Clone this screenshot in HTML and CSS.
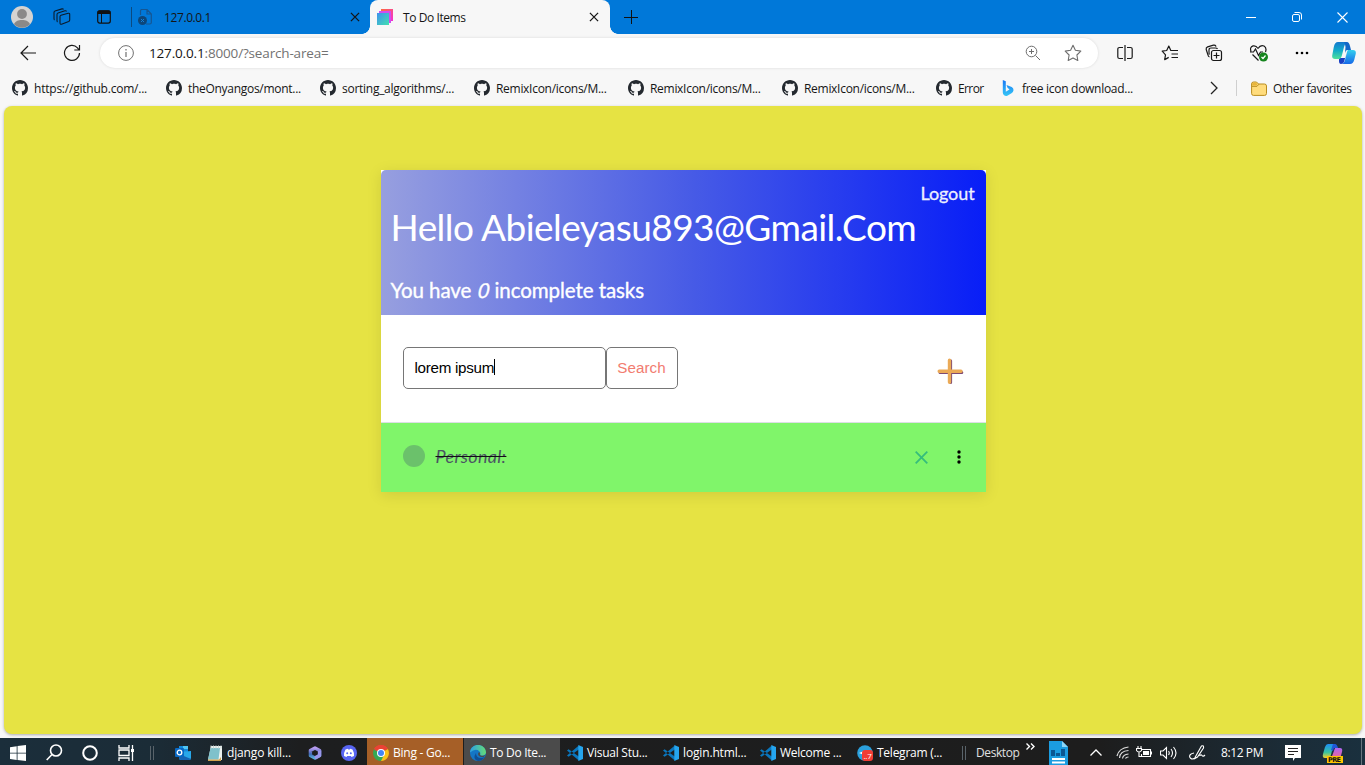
FILE: index.html
```html
<!DOCTYPE html>
<html lang="en">
<head>
<meta charset="utf-8">
<title>To Do Items</title>
<link rel="stylesheet" href="styles.css">
</head>
<body>
<svg class="defs" aria-hidden="true">
  <defs>
    <linearGradient id="gFav" x1="0" y1="0" x2="1" y2="1"><stop offset="0" stop-color="#3d91ee"/><stop offset="1" stop-color="#42e0b0"/></linearGradient>
    <linearGradient id="gFavP" x1="0" y1="0" x2="1" y2="1"><stop offset="0" stop-color="#ff6a3c"/><stop offset="1" stop-color="#f22fd6"/></linearGradient>
    <linearGradient id="gBing" x1="0" y1="0" x2="0" y2="1"><stop offset="0" stop-color="#1877f5"/><stop offset="1" stop-color="#36c6f6"/></linearGradient>
    <linearGradient id="gCopA" x1="0" y1="0" x2="0" y2="1"><stop offset="0" stop-color="#1478ce"/><stop offset=".5" stop-color="#12abc9"/><stop offset="1" stop-color="#4fe29a"/></linearGradient>
    <linearGradient id="gCopB" x1="0" y1="0" x2="0" y2="1"><stop offset="0" stop-color="#34d0ee"/><stop offset="1" stop-color="#1668e8"/></linearGradient>
    <linearGradient id="gPreA" x1="0" y1="0" x2="0" y2="1"><stop offset="0" stop-color="#1d8df5"/><stop offset=".6" stop-color="#38c4a0"/><stop offset="1" stop-color="#f5cf29"/></linearGradient>
    <linearGradient id="gPreB" x1="0" y1="0" x2="0" y2="1"><stop offset="0" stop-color="#ac65f3"/><stop offset="1" stop-color="#f4668c"/></linearGradient>
    <linearGradient id="gOff" x1="0" y1="0" x2="0" y2="1"><stop offset="0" stop-color="#b79af0"/><stop offset=".6" stop-color="#3f68b4"/><stop offset="1" stop-color="#5ab0d8"/></linearGradient>
    <linearGradient id="gEdge" x1="0" y1="0" x2="1" y2="0"><stop offset="0" stop-color="#2c9fe4"/><stop offset="1" stop-color="#65dc75"/></linearGradient>
    <symbol id="github" viewBox="0 0 16 16"><path fill="#24292f" d="M8 0C3.58 0 0 3.58 0 8c0 3.54 2.29 6.53 5.47 7.59.4.07.55-.17.55-.38 0-.19-.01-.82-.01-1.49-2.01.37-2.53-.49-2.69-.94-.09-.23-.48-.94-.82-1.13-.28-.15-.68-.52-.01-.53.63-.01 1.08.58 1.23.82.72 1.21 1.87.87 2.33.66.07-.52.28-.87.51-1.07-1.78-.2-3.64-.89-3.64-3.95 0-.87.31-1.59.82-2.15-.08-.2-.36-1.02.08-2.12 0 0 .67-.21 2.2.82.64-.18 1.32-.27 2-.27s1.36.09 2 .27c1.53-1.04 2.2-.82 2.2-.82.44 1.1.16 1.92.08 2.12.51.56.82 1.27.82 2.15 0 3.07-1.87 3.75-3.65 3.95.29.25.54.73.54 1.48 0 1.07-.01 1.93-.01 2.2 0 .21.15.46.55.38A8.01 8.01 0 0 0 16 8c0-4.42-3.58-8-8-8z"/></symbol>
    <symbol id="close" viewBox="0 0 12 12"><path d="M2.500 2.500l7 7M9.500 2.500l-7 7" fill="none" stroke="currentColor" stroke-width="1.100"/></symbol>
    <symbol id="vscode" viewBox="0 0 16 16"><path fill="#0a76bd" d="M1.6 4.2L0 5.400l11.500 9.800 1-3.100zM1.600 11.800L0 10.600 11.500.8l1 3.100z"/><path fill="#25a5ee" d="M11.300 0L16 2v12l-4.700 2z"/></symbol>
  </defs>
</svg>

<header class="tabstrip">
  <div class="cell"><svg width="22" height="22" viewBox="0 0 22 22"><circle cx="11" cy="11" r="11" fill="#d5d3d1"/><circle cx="11" cy="8" r="4.900" fill="#8b8988"/><path fill="#8b8988" d="M3 18.300c1.500-5.700 14.500-5.700 16 0A11 11 0 0 1 3 18.300z"/></svg></div>
  <div class="cell"><svg width="18" height="18" viewBox="0 0 18 18" fill="none" stroke="#0a1a2a" stroke-width="1.100" stroke-linejoin="round"><path d="M7 8.500Q7 7.500 8 7.200L15.200 5.200Q16.700 5 16.700 6.500V12Q16.700 13 15.700 13.500L8.500 16.300Q7 16.500 7 15zM4.500 14Q4 13.500 4 12.500V6.500Q4 5.300 5 5L12 2.800Q13.300 2.600 13.500 3.500M1.500 12Q1 11.500 1 10.500V4.500Q1 3.300 2 3L9 .9Q10.200.7 10.500 1.500"/></svg></div>
  <div class="cell"><svg width="14" height="14" viewBox="0 0 14 14"><rect x=".7" y=".9" width="12.600" height="12.200" rx="2" fill="none" stroke="#111" stroke-width="1.200"/><path d="M.5 4V2q0-1.500 1.500-1.500h10q1.500 0 1.500 1.500v2zM4 3h1v10H4z" fill="#111"/></svg></div>
  <div class="tab">
    <svg width="14" height="16" viewBox="0 0 14 16"><path d="M2.500 6V2q0-1.500 1.500-1.500h5L13.300 5v8.500q0 1.500-1.500 1.500H8M9 .5V5h4.300" fill="none" stroke="#155693" stroke-width="1.200"/><circle cx="4.500" cy="11.500" r="4.500" fill="#0d4679"/><path d="M3 10l3 3M6 10l-3 3" stroke="#1681d8"/></svg>
    <span class="ui t-ip">127.0.0.1</span>
    <svg class="x" width="14" height="14"><use href="#close"/></svg>
  </div>
  <div class="tab active">
    <svg width="16" height="16" viewBox="0 0 16 16"><path fill="url(#gFavP)" d="M4 0h12v12H4z"/><path fill="#d04df0" d="M2 2h12v12H2z"/><path fill="url(#gFav)" d="M0 4h12v12H0z"/></svg>
    <span class="ui t-todo">To Do Items</span>
    <svg class="x" width="14" height="14"><use href="#close"/></svg>
  </div>
  <div class="cell"><svg width="14" height="14"><path d="M7.500 0v14M0 7.500h14" stroke="#111"/></svg></div>
  <div></div>
  <div class="cell"><svg width="10" height="10"><path d="M0 5.500h10" stroke="#fff"/></svg></div>
  <div class="cell"><svg width="10" height="10" fill="none" stroke="#fff"><rect x=".5" y="2.500" width="7" height="7" rx="1.500"/><path d="M2.500.5H7q2.500 0 2.500 2.500v4.500"/></svg></div>
  <div class="cell"><svg width="11" height="11"><path d="M.5.5l10 10M10.500.5l-10 10" stroke="#fff" stroke-width="1.100"/></svg></div>
</header>

<div class="toolbar">
  <div class="cell"><svg width="16" height="16" fill="none" stroke="#191919" stroke-width="1.200"><path d="M16 8H1M8 1L1 8l7 7"/></svg></div>
  <div class="cell reload"><svg width="18" height="18" fill="none" stroke="#191919" stroke-width="1.200"><path d="M16.500 9A7.500 7.500 0 1 1 14.500 3.800l1.500 2M16.500 1v5H11.300"/></svg></div>
  <div class="address">
    <svg width="16" height="16" fill="none" stroke="#707070"><circle cx="8" cy="8" r="7.400"/><path d="M8 7v5M8 4v1.500" stroke-width="1.200"/></svg>
    <span class="ui url"><b>127.0.0.1</b>:8000/?search-area=</span>
    <svg class="mag" width="16" height="16" fill="none" stroke="#6d6d6d"><circle cx="6.500" cy="6.500" r="5.300"/><path d="M10.500 10.500l4.500 4.500M6.500 4v5M4 6.500h5"/></svg>
    <svg width="18" height="18" viewBox="0 0 18 18" fill="none" stroke="#6d6d6d" stroke-linejoin="round" stroke-width="1.100"><path d="M9 1.300l2.400 5 5.400.8-3.900 3.900.9 5.500L9 13.900l-4.800 2.600.9-5.500L1.200 7.100l5.400-.8z"/></svg>
  </div>
  <div class="cell"><svg width="16" height="16" fill="none" stroke="#191919" stroke-width="1.200"><path d="M6 2.500H2.500Q.8 2.500.8 4v8q0 1.500 1.700 1.500H6M10 2.500h3.500q1.700 0 1.700 1.500v8q0 1.500-1.700 1.500H10M8 0v16"/></svg></div>
  <div class="cell"><svg width="18" height="18" fill="none" stroke="#191919" stroke-width="1.200" stroke-linejoin="round"><path d="M10 6.500h-.2L7.800 2 5.700 6.500l-4.500.7 3.300 3.600-.8 4.800 4-2.200M10 6.500h7M10.500 10H17M10.500 13.500H17"/></svg></div>
  <div class="cell"><svg width="18" height="18" fill="none" stroke="#191919" stroke-width="1.200"><rect x="6.500" y="6.500" width="10" height="10" rx="2"/><path d="M11.500 8.500v6M8.500 11.500h6M4.500 13Q3.200 12.500 3 11L1.200 5.500Q.8 3.500 2.600 2.900L8.500 1.200q2-.5 2.500 1.500M4.500 10.500Q4 10 4 8V6q0-2 2-2h4.500q1.500 0 2 1"/></svg></div>
  <div class="cell"><svg width="20" height="18" fill="none" stroke="#191919" stroke-width="1.200"><path d="M9 4.500Q7 1.200 4 1.900.5 3 2 7.500M9 4.500q2.500-4 6-2.500Q18 4 16.500 8M3.500 10.500l6 6M1 8h3.500l2-3 3 6.500L11.500 8H14"/><circle cx="14.500" cy="13" r="4.500" fill="#16851e" stroke="none"/><path d="M12.500 13l1.500 1.500 2.500-3" stroke="#fff"/></svg></div>
  <div class="cell"><svg width="14" height="4"><circle cx="2" cy="2" r="1.300"/><circle cx="7" cy="2" r="1.300"/><circle cx="12" cy="2" r="1.300"/></svg></div>
  <div class="cell copilot"><svg width="24" height="23" viewBox="0 0 24 23"><path fill="url(#gCopB)" d="M16 8h5q3.500 0 2.700 4l-1.500 6q-1.100 4-4.200 4H9q3 0 4-4l2-8q.500-2 1-2z"/><path fill="#183ec4" d="M7 16h6l1.500-5-2.500 9q-1 2-3 2-2 0-2-3z"/><path fill="url(#gCopA)" d="M6 0h9q-2 1-3 5l-2 8q-1 4-3 4H3q-3.500 0-2.700-4l1.500-8Q2.800 0 6 0z"/><path fill="#1267c8" d="M12 0h3q2 0 3 4l1 4h-4q-1 0-2 3l.500-6Q13 1 12 0z"/></svg></div>
</div>

<nav class="bookmarks">
  <a class="ui"><svg width="16" height="16"><use href="#github"/></svg><span class="b1">https://github.com/...</span></a>
  <a class="ui"><svg width="16" height="16"><use href="#github"/></svg><span>theOnyangos/mont...</span></a>
  <a class="ui"><svg width="16" height="16"><use href="#github"/></svg><span class="b3">sorting_algorithms/...</span></a>
  <a class="ui"><svg width="16" height="16"><use href="#github"/></svg><span>RemixIcon/icons/M...</span></a>
  <a class="ui"><svg width="16" height="16"><use href="#github"/></svg><span>RemixIcon/icons/M...</span></a>
  <a class="ui"><svg width="16" height="16"><use href="#github"/></svg><span>RemixIcon/icons/M...</span></a>
  <a class="ui"><svg width="16" height="16"><use href="#github"/></svg><span class="b5">Error</span></a>
  <a class="ui bing"><svg width="12" height="16" viewBox="0 0 12 16"><path fill="url(#gBing)" d="M.8 0l3 1.200v10.600l3.700-2.200-2-1.800L4.500 5l5.200 2q2 .9 1.800 3.300-.2 2-2 3l-4.200 2.400q-1.800.7-3.200-.5Q.8 14 .8 12.500z"/></svg><span>free icon download...</span></a>
  <div class="cell"><svg width="8" height="14" fill="none" stroke="#222" stroke-width="1.300"><path d="M1 1l6 6-6 6"/></svg></div>
  <i class="rule"></i>
  <a class="ui other"><svg width="16" height="15"><path d="M.6 3Q.6 1 2.500 1h3L7.500 3h6q2 0 2 2v7.500q0 1.900-2 1.900h-11q-1.900 0-1.900-1.900z" fill="#ffdc7c" stroke="#b98c1e"/><path d="M1 5.300h5L8 3.200" fill="none" stroke="#b98c1e"/><path d="M1.200 4.600V3q0-1.300 1.300-1.300H5l1.500 1.500L5.500 4.600z" fill="#e9b53a"/></svg><span class="b7">Other favorites</span></a>
</nav>

<main class="page">
  <section class="card">
    <div class="banner">
      <a class="logout">Logout</a>
      <h1>Hello Abieleyasu893@Gmail.Com</h1>
      <h3>You have <em>0</em> incomplete tasks</h3>
    </div>
    <div class="search-row">
      <div class="field">lorem ipsum<i class="caret"></i></div>
      <div class="button">Search</div>
      <svg class="add" width="27" height="27" viewBox="0 0 27 27" stroke-linecap="round" stroke-width="3"><path d="M13.600 2.800v21.800M3 14.500h21.800" stroke="#7d4a74"/><path d="M12.500 2.200v22M2.200 13.300h21.800" stroke="#ebaa56" stroke-width="3.400"/></svg>
    </div>
    <div class="task">
      <i class="status"></i>
      <s>Personal:</s>
      <svg class="del" width="13" height="13"><path d="M.7.700l11.600 11.600M12.300.7L.7 12.300" stroke="#34bd7c" stroke-width="1.800"/></svg>
      <svg class="dots" width="4" height="14"><circle cx="2" cy="2" r="1.700"/><circle cx="2" cy="7" r="1.700"/><circle cx="2" cy="12" r="1.700"/></svg>
    </div>
  </section>
</main>

<footer class="taskbar">
  <div class="cell"><svg width="16" height="16" fill="#fff"><path d="M0 2.200l6.700-1v6.500H0zM7.500 1.100L16 0v7.700H7.500zM0 8.500h6.700v6.400L0 14zM7.500 8.500H16V16l-8.500-1.100z"/></svg></div>
  <div class="cell"><svg width="17" height="17" fill="none" stroke="#fff" stroke-width="1.600"><circle cx="10" cy="6.500" r="5.500"/><path d="M6 10.500L.7 16"/></svg></div>
  <div class="cell"><svg width="16" height="16" fill="none" stroke="#fff" stroke-width="2"><circle cx="8" cy="8" r="6.800"/></svg></div>
  <div class="cell"><svg width="17" height="16" fill="none" stroke="#fff" stroke-width="1.300"><path d="M1 0v3h10V0M1 16v-3h10v3M1 5h10v5.500H1zM14.500 0v16"/><path d="M13 4h3v3h-3z" fill="#fff" stroke="none"/></svg></div>
  <i class="grip"></i>
  <div class="cell"><svg width="16" height="16"><path fill="#1389dc" d="M4 1h9v6H4z"/><path fill="#50c5f5" d="M8 1h5v3H8z"/><path fill="#28a8ea" d="M4 7l12-1v7q0 2-2 2H6q-2 0-2-2z"/><path fill="#1464b4" d="M4 9l12 5q-.5 1-2 1H6q-2 0-2-2z"/><rect y="3" width="9" height="9" rx="1" fill="#0968c3"/><circle cx="4.500" cy="7.500" r="2.300" fill="none" stroke="#fff" stroke-width="1.300"/></svg></div>
  <div class="app note"><svg width="16" height="16"><path fill="#edf3f1" d="M4 1h11v14H1z"/><path fill="#7fc1cb" d="M3.500 3H13l-1.500 11.500H1z"/><path d="M4 .5v3M6.500.5v3M9 .5v3M11.500.5v3M14 .5v3" stroke="#ccd6d4"/><path fill="#d2a44e" d="M1 14.500h11L14 12v4H1z"/></svg><span>django kill...</span></div>
  <div class="cell"><svg width="14" height="14" fill="none" stroke-width="3.400" stroke-linejoin="round"><path d="M7 2L2.400 4.500v5L7 12l4.600-2.500v-5z" stroke="url(#gOff)"/><path d="M11.600 4.500v5L7 12" stroke="#9a96ea"/></svg></div>
  <div class="cell"><svg width="16" height="16"><circle cx="8" cy="8" r="8" fill="#5865f2"/><path fill="#fff" d="M4.500 4.500l2.300-.8.500.8h1.400l.5-.8 2.300.8Q13.200 7.300 13 11l-2.500 1-.7-1H6.200l-.7 1L3 11q-.2-3.700 1.500-6.500z"/><circle cx="6.200" cy="8.300" r="1" fill="#5865f2"/><circle cx="9.800" cy="8.300" r="1" fill="#5865f2"/></svg></div>
  <div class="app chrome"><svg width="16" height="16"><path fill="#ea4335" d="M8 8L1.100 4A8 8 0 0 1 14.900 4z"/><path fill="#fbc116" d="M8 8l6.900-4A8 8 0 0 1 8 16z"/><path fill="#34a853" d="M1.100 4A8 8 0 0 0 8 16l3-6z"/><path fill="#ea4335" d="M8 4h6.900A8 8 0 0 0 1.100 4l2 2z"/><circle cx="8" cy="8" r="4" fill="#fff"/><circle cx="8" cy="8" r="3" fill="#4285f4"/></svg><span>Bing - Go...</span></div>
  <div class="app edge"><svg width="16" height="16"><circle cx="8" cy="8" r="8" fill="#1476c5"/><path fill="url(#gEdge)" d="M0 7.500C.5-2.500 15.500-2.500 16 7.500c0 3-4 4-6.200 2.500Q11 8 9.300 6.200 5.500 3 0 7.500z"/><path fill="#0f4e95" d="M6 8q0 5 5 5 2 0 3.800-1Q12 16 8 16q-6-2-2-8z"/><path fill="#4b4b4b" d="M8.500 7.500q-1 1.500 0 3 2 2 5 1.500l2.200-2q-2.700 1.500-5.500.3Q10 9 10 7.500z"/></svg><span>To Do Ite...</span></div>
  <div class="app"><svg width="16" height="16"><use href="#vscode"/></svg><span>Visual Stu...</span></div>
  <div class="app"><svg width="16" height="16"><use href="#vscode"/></svg><span class="wide">login.html...</span></div>
  <div class="app"><svg width="16" height="16"><use href="#vscode"/></svg><span>Welcome ...</span></div>
  <div class="app"><svg width="16" height="16"><circle cx="8" cy="8" r="7.800" fill="#2ba0dc"/><path d="M2 8l5-2v4z" fill="#fff"/><rect x="5" y="5" width="11" height="11" rx="3" fill="#f23c34"/><text x="6.500" y="14" font-family="Open Sans, sans-serif" font-size="8" fill="#fff">..7</text></svg><span>Telegram (...</span></div>
  <i class="grip late"></i>
  <span class="desk">Desktop</span>
  <svg class="more" width="9" height="9" fill="none" stroke="#fff" stroke-width="1.400"><path d="M.5 2.500l3 3-3 3M5 2.500l3 3-3 3"/></svg>
  <div class="cell doc"><svg width="19" height="24"><path fill="#1b9ce0" d="M0 0h13l6 6v18H0z"/><path fill="#8bd5f7" d="M13 0l6 6h-6z"/><path fill="#0a5792" d="M2 9h4v6H2zM7 12h4v3H7zM12 8h4v7h-4z"/><path stroke="#fff" stroke-width="2" d="M3 18h13M3 21.500h13"/></svg></div>
  <div class="cell"><svg width="12" height="7" fill="none" stroke="#fff" stroke-width="1.300"><path d="M.5 6.500l5.500-5.500 5.500 5.500"/></svg></div>
  <div class="cell wifi"><svg width="13" height="13" fill="none" stroke="#ddd" stroke-width="1.200"><path d="M1 10Q3 2 12.500 1M3.500 12Q4 5 12.500 4.500M6.500 12.500Q7 8.500 12.500 8M9.500 12.500q.5-1.500 3-1.500"/></svg></div>
  <div class="cell"><svg width="16" height="13" fill="none" stroke="#fff" stroke-width="1.100"><path d="M5 3.500h9.500v7H5.500V8M15.500 5.500v3M2 0v2M5 0v2M.5 2.500h5v2q-1 1.500-2.500 1.500T.5 4.500zM3 6v4.500h2.500"/><path fill="#fff" stroke="none" d="M7 5h6v4H7z"/></svg></div>
  <div class="cell"><svg width="17" height="14" fill="none" stroke="#fff" stroke-width="1.100"><path d="M.5 5H3l3.500-3.500v11L3 9H.5zM8.500 5q1.500 2 0 4M11 3q3 4 0 8M13.500 1q5 6 0 12"/></svg></div>
  <div class="cell"><svg width="17" height="15" fill="none" stroke="#fff" stroke-width="1.100"><path d="M6 12.500L12.500 1Q15 0 14.500 3L8.500 12 5 14zM5 8Q0 9 .7 12q1.500 3 4.300 1.500M10.500 11q1.500-2 2.500-.5T16 10"/></svg></div>
  <span class="clock">8:12 PM</span>
  <div class="cell"><svg width="16" height="16"><path fill="#fff" d="M0 0h16v13h-6l-2 3v-3H0z"/><path stroke="#222" d="M3 3.500h10M3 6.500h10M3 9.500h6"/></svg></div>
  <div class="cell"><svg width="21" height="20"><path fill="url(#gPreA)" d="M6 1h6l-4 14H3q-3 0-2-4L3 4q1-3 3-3z"/><path fill="#2057d8" d="M11 1h2q2 0 3 4h-4l-1 3-2-1z"/><path fill="url(#gPreB)" d="M13 5h5q3 0 2 4l-2 7H9z"/><path fill="#ffc400" d="M5 13h16v7H5z"/><text x="6" y="19.200" font-family="DejaVu Sans, sans-serif" font-weight="700" font-size="6.500" fill="#111" textLength="13">PRE</text></svg></div>
  <i class="peek"></i>
</footer>
</body>
</html>
```

FILE: styles.css
```css
* { box-sizing: border-box; }
body {
  margin: 0;
  width: 1365px;
  height: 765px;
  overflow: hidden;
  display: flex;
  flex-direction: column;
  background: #f7f7f7;
  color: #151515;
  font: 12px "Open Sans", sans-serif;
}
.defs { position: absolute; width: 0; height: 0; }
svg { display: block; flex: none; }
.cell { display: flex; align-items: center; justify-content: center; }
.ui { white-space: nowrap; }

/* tab strip */
.tabstrip {
  height: 34px;
  display: grid;
  grid-template-columns: 44px 36px 51px 239px 240px 42px 576px 46px 46px 45px;
  background: #0078d9;
}
.tabstrip .cell:nth-child(3) { padding-right: 4px; }
.tab { position: relative; display: flex; align-items: center; padding: 0 8px 0 7px; }
.tab:not(.active)::before {
  content: "";
  position: absolute;
  left: 0;
  top: 7px;
  width: 1px;
  height: 20px;
  background: #0b4a80;
}
.tab .ui { margin-left: 12px; }
.tab .x { margin-left: auto; }
.tab.active { background: #f7f7f7; border-radius: 8px 8px 0 0; padding-right: 9px; }
.tab.active .ui { margin-left: 10px; }
.tab.active::before, .tab.active::after {
  content: "";
  position: absolute;
  bottom: 0;
  width: 8px;
  height: 8px;
}
.tab.active::before { left: -8px; background: radial-gradient(circle at 0 0, transparent 7.5px, #f7f7f7 8px); }
.tab.active::after { right: -8px; background: radial-gradient(circle at 100% 0, transparent 7.5px, #f7f7f7 8px); }
.t-ip { letter-spacing: -.4px; }
.t-todo { letter-spacing: -.42px; }

/* toolbar */
.toolbar {
  height: 38px;
  display: grid;
  grid-template-columns: 56px 44px 998px 54px 36px 52px 37px 49px 39px;
  align-items: center;
}
.reload { padding-right: 12px; }
.copilot { padding-right: 4px; }
.address {
  height: 30px;
  display: flex;
  align-items: center;
  border-radius: 15px;
  background: #fff;
  box-shadow: 0 0 3px rgba(0, 0, 0, .12);
  padding: 0 16px 0 18px;
}
.url { margin-left: 15px; font-size: 13.5px; letter-spacing: -.16px; color: #727272; }
.url b { font-weight: 400; color: #151515; }
.mag { margin-left: auto; margin-right: 23px; }

/* bookmarks */
.bookmarks {
  height: 34px;
  padding: 0 13px 2px 12px;
  display: grid;
  grid-template-columns: repeat(6, 154px) 66px 197px 29px 15px 113px;
  align-items: center;
}
.bookmarks a { display: flex; align-items: center; gap: 6px; }
.bookmarks .bing { gap: 8px; }
.rule { width: 1px; height: 16px; background: #cfcfcf; margin-left: 8px; }
.bookmarks .other { margin-left: 8px; }
.bookmarks span { letter-spacing: -.29px; }
.bookmarks .b1 { letter-spacing: -.22px; }
.bookmarks .b3 { letter-spacing: -.27px; }
.bookmarks .b5 { letter-spacing: -.6px; }
.bookmarks .b7 { letter-spacing: -.38px; }

/* page */
.page {
  height: 628px;
  margin: 0 3px 0 4px;
  border-radius: 8px;
  background: #e6e343;
  box-shadow: 0 1px 3px rgba(0, 0, 0, .3);
  display: flex;
  justify-content: center;
  align-items: flex-start;
  padding-top: 64px;
}
.card {
  width: 605px;
  height: 322px;
  background: #fff;
  box-shadow: 0 3px 14px rgba(0, 0, 0, .1);
}
.banner {
  position: relative;
  height: 145px;
  padding: 0 10px;
  border-radius: 5px 5px 0 0;
  background: linear-gradient(to right, #979fdf, #465ae6 52%, #081ef7);
  color: #fff;
  font-family: Lato, sans-serif;
}
.logout { position: absolute; right: 11px; top: 12px; font-size: 18px; line-height: 23px; color: #eef0ff; letter-spacing: -.1px; -webkit-text-stroke: .3px #eef0ff; }
.banner h1 { margin: 0; padding-top: 34px; font-size: 37px; font-weight: 400; line-height: 46px; letter-spacing: -.55px; white-space: nowrap; }
.banner h3 { margin: 0; padding-top: 27px; font-size: 20.5px; font-weight: 400; line-height: 27px; letter-spacing: -.07px; white-space: nowrap; -webkit-text-stroke: .35px #fff; }
.banner em { margin-left: 1px; display: inline-block; transform: skewX(-7deg); }
.search-row {
  height: 108px;
  padding: 32px 22px 0;
  display: flex;
  align-items: flex-start;
  border-bottom: 1px solid #dcdfe4;
  font: 15.2px "Liberation Sans", Arial, sans-serif;
}
.field, .button {
  height: 42px;
  border: 1px solid #767676;
  border-radius: 5px;
  display: flex;
  align-items: center;
  padding-bottom: 2px;
}
.field { width: 203px; padding-left: 11px; color: #000; letter-spacing: -.28px; }
.caret { width: 1px; height: 16px; background: #000; }
.button { width: 72px; justify-content: center; color: #f27c70; letter-spacing: .05px; }
.add { margin: 11px 0 0 auto; }
.task {
  height: 69px;
  padding: 0 25px 0 22px;
  display: flex;
  align-items: center;
  background: #80f56a;
}
.status { width: 22px; height: 22px; border-radius: 50%; background: #6bc16b; margin-bottom: 3px; }
.task s { margin: 0 0 3px 11px; font: italic 18px Lato, sans-serif; letter-spacing: .3px; color: #4b5563; text-decoration-color: #111; }
.task .del { margin: 0 29px 1px auto; }
.task .dots { margin-bottom: 2px; }

/* taskbar */
.taskbar {
  margin-top: 4px;
  height: 27px;
  color: #fff;
  display: grid;
  grid-template-columns: 36px 36px 36px 36px 28px 22px 104px 34px 35px 97px 97px 96px 97px 97px 108px 13px 50px 16px 37px 38px 14px 30px 18px 40px 60px 37px 44px 9px;
  background: linear-gradient(to right, #1b2e3b 0, #1b2c37 150px, #1d1e1f 300px, #1d1d1d 1100px, #1b2d39 1300px, #1a303e);
  white-space: nowrap;
}
.taskbar > * { min-width: 0; padding-top: 2px; }
.taskbar > .grip { width: 4px; height: 14px; margin: 8px 0 0 6px; border: solid #59636a; border-width: 0 1px; padding: 0; }
.taskbar > .late { margin-left: 3px; }
.taskbar > .cell:nth-child(9) { padding-right: 1px; }
.taskbar > .cell:nth-child(n+19):nth-child(-n+24) { padding-left: 4px; }
.taskbar > .cell.wifi { padding-left: 1px; }
.app { display: flex; align-items: center; gap: 4px; padding-left: 6px; letter-spacing: -.25px; }
.app.note { padding-left: 13px; letter-spacing: -.15px; }
.app .wide { letter-spacing: -.15px; }
.app.chrome { background: #a65f27; margin-right: 1px; }
.app.edge { background: #4b4b4b; margin-right: 1px; letter-spacing: -.3px; }
.desk, .clock { align-self: center; color: #e0e0e0; letter-spacing: -.4px; }
.desk { padding-left: 4px; }
.taskbar > .clock { color: #fff; padding-left: 6px; }
.more { margin: 3px 0 0 4px; padding: 0; }
.taskbar > .more { padding-top: 0; }
.taskbar > .cell:nth-child(26) { padding-right: 2px; }
.taskbar > .cell:nth-child(27) { padding-right: 4px; }
.taskbar > .peek { border-left: 1px solid #66757e; margin-left: 5px; }
```
